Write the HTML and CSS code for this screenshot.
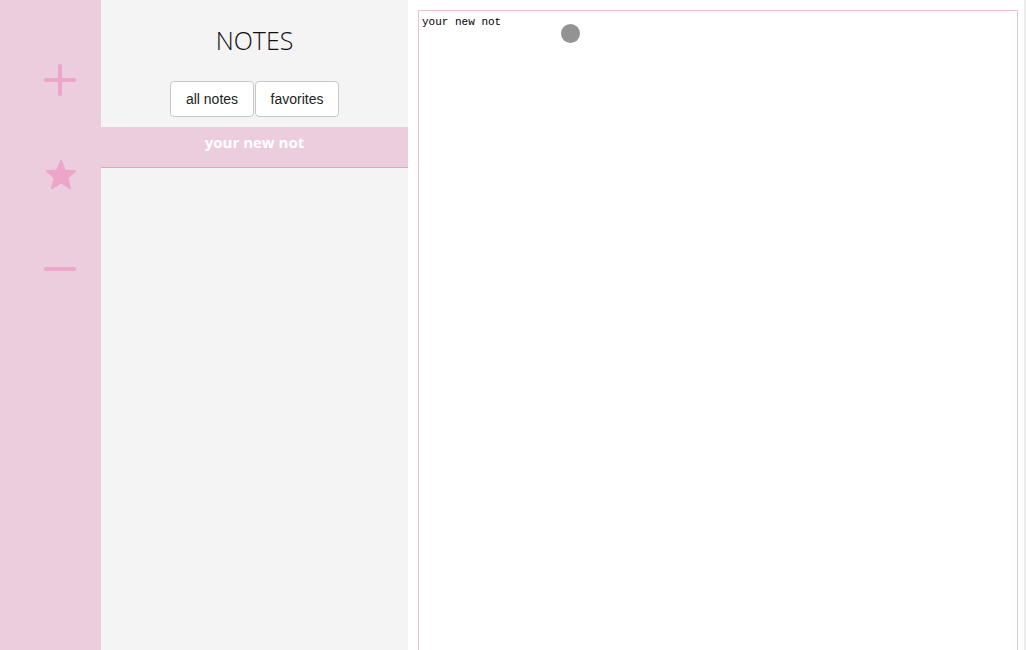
FILE: index.html
```html
<!DOCTYPE html>
<html>
<head>
<meta charset="utf-8">
<link rel="stylesheet" href="styles.css">
</head>
<body>
<div class="app">
  <nav class="sidebar">
    <button class="icon-btn add" aria-label="add">
      <svg width="32" height="32" viewBox="0 0 32 32"><path d="M16 2V30M2 16H30" stroke="#eda5c9" stroke-width="4" stroke-linecap="round" fill="none"/></svg>
    </button>
    <button class="icon-btn fav" aria-label="favorite">
      <svg width="34" height="32" viewBox="0 0 34 32"><path d="M17 1.5L21.2 11.2L31.6 12L23.6 18.9L26.2 29.3L17 23.7L7.8 29.3L10.4 18.9L2.4 12L12.8 11.2Z" fill="#eda5c9" stroke="#eda5c9" stroke-width="1.5" stroke-linejoin="round"/></svg>
    </button>
    <button class="icon-btn del" aria-label="delete">
      <svg width="32" height="6" viewBox="0 0 32 6"><path d="M2 3H30" stroke="#eda5c9" stroke-width="4" stroke-linecap="round"/></svg>
    </button>
  </nav>
  <section class="list">
    <h1 class="title">NOTES</h1>
    <div class="filters">
      <button class="filter">all notes</button><button class="filter">favorites</button>
    </div>
    <ul class="notes">
      <li class="note active">your new not</li>
    </ul>
  </section>
  <main class="editor">
    <textarea class="text">your new not</textarea>
    <span class="cursor"></span>
  </main>
</div>
</body>
</html>
```
FILE: styles.css
```css
html, body {
  margin: 0;
  padding: 0;
  height: 100%;
  overflow: hidden;
}
body {
  font-family: "Liberation Sans", Arial, sans-serif;
  background: #fff;
}
.app {
  display: flex;
  height: 650px;
}
.sidebar {
  width: 101px;
  flex: none;
  background: #eccddd;
  display: flex;
  flex-direction: column;
  align-items: center;
  padding: 64px 0 0 18px;
  box-sizing: border-box;
}
.icon-btn {
  background: none;
  border: 0;
  padding: 0;
  margin: 0;
  display: flex;
  justify-content: center;
  align-items: center;
}
.icon-btn.fav { margin-top: 63px; margin-left: 2px; }
.icon-btn.del { margin-top: 75px; }
.list {
  width: 307px;
  flex: none;
  background: #f4f4f4;
}
.title {
  margin: 24px 0 0;
  text-align: center;
  font-family: "Open Sans", sans-serif;
  font-weight: 300;
  font-size: 25px;
  line-height: 32px;
  color: #111;
}
.filters {
  display: flex;
  justify-content: center;
  margin-top: 25px;
}
.filter {
  height: 36px;
  width: 84px;
  padding: 0;
  background: #fff;
  border: 1px solid #c8c8c8;
  border-radius: 4px;
  font-family: "Liberation Sans", Arial, sans-serif;
  font-size: 14px;
  color: #222;
}
.filter + .filter { margin-left: 1px; }
.notes {
  list-style: none;
  margin: 10px 0 0;
  padding: 0;
}
.note {
  height: 41px;
  box-sizing: border-box;
  background: #eccddd;
  border-bottom: 1px solid #e2a3c1;
  color: #fff;
  font-family: "Open Sans", sans-serif;
  font-weight: 700;
  font-size: 15px;
  text-align: center;
  line-height: 31px;
}
.editor {
  flex: 1;
  position: relative;
  padding: 10px 0 0 10px;
  border-right: 2px solid #ececec;
  box-sizing: border-box;
}
.text {
  display: block;
  width: 600px;
  height: 660px;
  box-sizing: border-box;
  border: 1px solid #eec0d4;
  padding: 4px 3px;
  margin: 0;
  resize: none;
  outline: none;
  font-family: "Liberation Mono", "Courier New", monospace;
  font-size: 11px;
  line-height: 14px;
  color: #000;
}
.cursor {
  position: absolute;
  left: 153px;
  top: 24px;
  width: 19px;
  height: 19px;
  border-radius: 50%;
  background: #939393;
}
```
